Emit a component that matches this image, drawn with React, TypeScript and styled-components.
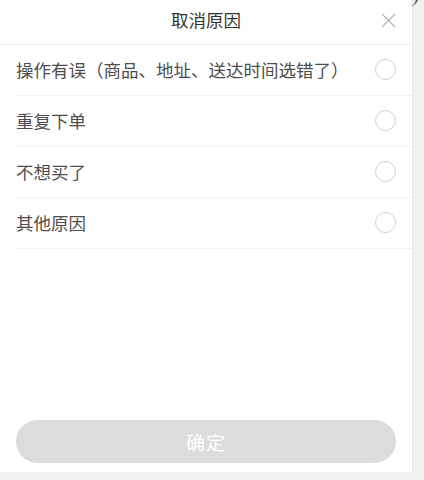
import React, { useState } from "react";
import styled, { createGlobalStyle } from "styled-components";

const reasons = [
  "操作有误（商品、地址、送达时间选错了）",
  "重复下单",
  "不想买了",
  "其他原因",
];

function CancelReason() {
  const [picked, setPicked] = useState<number | null>(null);

  return (
    <Sheet>
      <Header>
        <Title>取消原因</Title>
        <CloseButton aria-label="关闭">
          <svg width="15" height="15" viewBox="0 0 15 15">
            <path d="M1 1L14 14M14 1L1 14" stroke="#b3b3b3" strokeWidth="1.3" fill="none" />
          </svg>
        </CloseButton>
      </Header>
      <List>
        {reasons.map((r, i) => (
          <Row key={r} onClick={() => setPicked(i)}>
            <Label>{r}</Label>
            <Radio $on={picked === i} />
          </Row>
        ))}
      </List>
      <Spacer />
      <Footer>
        <ConfirmButton disabled={picked === null}>确定</ConfirmButton>
      </Footer>
    </Sheet>
  );
}

const GlobalStyle = createGlobalStyle`
  html, body {
    margin: 0;
    padding: 0;
    background: #f1f1f1;
  }
  body {
    font-family: "Noto Sans CJK SC", "Noto Sans", sans-serif;
  }
`;

const Sheet = styled.div`
  position: relative;
  width: 412px;
  height: 472px;
  background: #fff;
  border-right: 1px solid #e4e4e4;
  display: flex;
  flex-direction: column;

  &::after {
    content: "";
    position: absolute;
    top: -4px;
    right: -6px;
    width: 8px;
    height: 10px;
    border-right: 2px solid #555;
    border-radius: 0 0 8px 0;
  }
`;

const Header = styled.div`
  position: relative;
  height: 45px;
  box-sizing: border-box;
  padding-bottom: 5px;
  display: flex;
  align-items: center;
  justify-content: center;
  border-bottom: 1px solid #f0f0f0;
`;

const Title = styled.h1`
  margin: 0;
  font-size: 17.5px;
  line-height: 1;
  font-weight: 400;
  color: #333;
`;

const CloseButton = styled.button`
  position: absolute;
  right: 16px;
  top: 13px;
  padding: 0;
  border: 0;
  background: none;
  display: flex;
  cursor: pointer;
`;

const List = styled.ul`
  margin: 0;
  padding: 0 0 0 16px;
  list-style: none;
`;

const Row = styled.li`
  height: 51px;
  box-sizing: border-box;
  padding: 0 16px 1px 0;
  display: flex;
  align-items: center;
  justify-content: space-between;
  border-bottom: 1px solid #f0f0f0;
  cursor: pointer;
`;

const Label = styled.span`
  font-size: 17.5px;
  line-height: 1;
  color: #4d4d4d;
`;

const Radio = styled.span<{ $on: boolean }>`
  width: 21px;
  height: 21px;
  border-radius: 50%;
  box-sizing: border-box;
  border: 1.3px solid ${(p) => (p.$on ? "#f5a623" : "#cfcfcf")};
  background: ${(p) => (p.$on ? "#f5a623" : "#fff")};
`;

const Spacer = styled.div`
  flex: 1;
`;

const Footer = styled.div`
  padding: 0 16px 9px;
`;

const ConfirmButton = styled.button`
  width: 100%;
  height: 43px;
  border: 0;
  border-radius: 22px;
  background: #dcdcdc;
  color: #fff;
  font-family: inherit;
  font-size: 19px;
  letter-spacing: 1px;
  &:not(:disabled) {
    background: #f5a623;
  }
`;

export default function App() {
  return (
    <>
      <GlobalStyle />
      <CancelReason />
    </>
  );
}
